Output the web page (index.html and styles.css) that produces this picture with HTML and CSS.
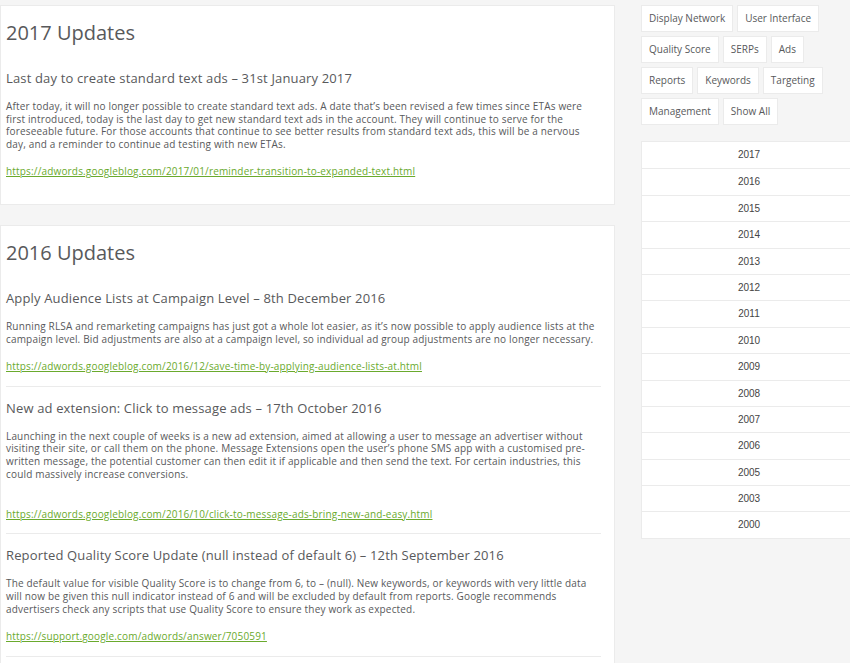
FILE: index.html
```html
<!DOCTYPE html>
<html lang="en">
<head>
	<meta charset="UTF-8">
	<title>AdWords Updates</title>
	<link rel="stylesheet" href="styles.css">
</head>
<body>
	<div class="page">
		<div class="content">
			<section class="panel">
				<h2>2017 Updates</h2>
				<article class="post">
					<h3>Last day to create standard text ads – 31st January 2017</h3>
					<p>After today, it will no longer possible to create standard text ads. A date that’s been revised a few times since ETAs were first introduced, today is the last day to get new standard text ads in the account. They will continue to serve for the foreseeable future. For those accounts that continue to see better results from standard text ads, this will be a nervous day, and a reminder to continue ad testing with new ETAs.</p>
					<p><a href="#">https://adwords.googleblog.com/2017/01/reminder-transition-to-expanded-text.html</a></p>
				</article>
			</section>

			<section class="panel">
				<h2>2016 Updates</h2>
				<article class="post">
					<h3>Apply Audience Lists at Campaign Level – 8th December 2016</h3>
					<p>Running RLSA and remarketing campaigns has just got a whole lot easier, as it’s now possible to apply audience lists at the campaign level. Bid adjustments are also at a campaign level, so individual ad group adjustments are no longer necessary.</p>
					<p><a href="#">https://adwords.googleblog.com/2016/12/save-time-by-applying-audience-lists-at.html</a></p>
				</article>
				<article class="post">
					<h3>New ad extension: Click to message ads – 17th October 2016</h3>
					<p>Launching in the next couple of weeks is a new ad extension, aimed at allowing a user to message an advertiser without visiting their site, or call them on the phone. Message Extensions open the user’s phone SMS app with a customised pre-written message, the potential customer can then edit it if applicable and then send the text. For certain industries, this could massively increase conversions.<br>&nbsp;</p>
					<p><a href="#">https://adwords.googleblog.com/2016/10/click-to-message-ads-bring-new-and-easy.html</a></p>
				</article>
				<article class="post">
					<h3>Reported Quality Score Update (null instead of default 6) – 12th September 2016</h3>
					<p>The default value for visible Quality Score is to change from 6, to – (null). New keywords, or keywords with very little data will now be given this null indicator instead of 6 and will be excluded by default from reports. Google recommends advertisers check any scripts that use Quality Score to ensure they work as expected.</p>
					<p><a href="#">https://support.google.com/adwords/answer/7050591</a></p>
				</article>
				<article class="post">
					<h3>Expanded Text Ads – 26th July 2016</h3>
					<p>Expanded text ads are now available to all advertisers.</p>
				</article>
			</section>
		</div>

		<aside class="sidebar">
			<div class="tags">
				<a class="tag" href="#">Display Network</a>
				<a class="tag" href="#">User Interface</a>
				<a class="tag" href="#">Quality Score</a>
				<a class="tag" href="#">SERPs</a>
				<a class="tag" href="#">Ads</a>
				<a class="tag" href="#">Reports</a>
				<a class="tag" href="#">Keywords</a>
				<a class="tag" href="#">Targeting</a>
				<a class="tag" href="#">Management</a>
				<a class="tag" href="#">Show All</a>
			</div>
			<ul class="years">
				<li>2017</li>
				<li>2016</li>
				<li>2015</li>
				<li>2014</li>
				<li>2013</li>
				<li>2012</li>
				<li>2011</li>
				<li>2010</li>
				<li>2009</li>
				<li>2008</li>
				<li>2007</li>
				<li>2006</li>
				<li>2005</li>
				<li>2003</li>
				<li>2000</li>
			</ul>
		</aside>
	</div>
</body>
</html>
```
FILE: styles.css
```css
* { margin: 0; padding: 0; box-sizing: border-box; }
html, body { height: 100%; }
body { background: #f5f5f5; color: #58595b; font-family: "Open Sans", "Noto Sans", sans-serif; overflow: hidden; }

.page { display: flex; align-items: flex-start; gap: 26px; width: 857px; padding-top: 5px; }

/* left column */
.content { flex: none; width: 615px; display: flex; flex-direction: column; gap: 20px; }
.panel { background: #fff; border: 1px solid #ebebeb; padding: 0 13px 13px 5px; }
.panel h2 { font-size: 20px; font-weight: 400; line-height: 25px; margin: 14px 0 12px; }
.post { padding: 12px 0 13px; }
.post + .post { border-top: 1px solid #ebebeb; }
.post h3 { font-size: 13px; font-weight: 400; line-height: 18px; letter-spacing: 0.15px; margin-bottom: 13px; }
.post p { font-size: 10px; line-height: 12.7px; letter-spacing: 0.17px; margin-bottom: 14.5px; }
.post p:last-child { margin-bottom: 0; }
.post a { color: #6aaa2d; text-decoration: underline; }

/* right column */
.sidebar { flex: none; width: 216px; }
.tags { display: flex; flex-wrap: wrap; gap: 4px; }
.tag { display: block; height: 27px; line-height: 25px; padding: 0 7px; background: #fff; border: 1px solid #ebebeb; font-size: 10px; color: #58595b; text-decoration: none; }
.years { list-style: none; margin-top: 16px; background: #fff; border: 1px solid #ebebeb; }
.years li { height: 26.4px; line-height: 25.4px; text-align: center; font-family: "Liberation Sans", Arial, sans-serif; font-size: 10px; color: #444; }
.years li + li { border-top: 1px solid #ebebeb; }
```
